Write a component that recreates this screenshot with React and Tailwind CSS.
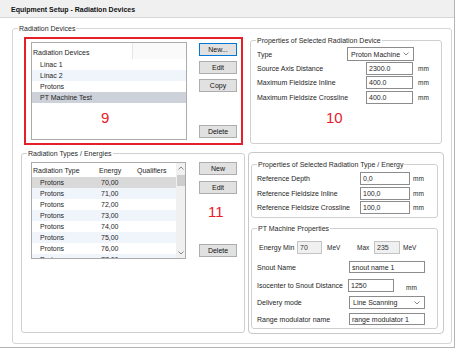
import React from "react";

function Group({ label, className = "", children }) {
  return (
    <div className={"border border-[#cfcfcf] rounded-[3px] " + className}>
      <div className="-mt-[5px] ml-[5px] px-[1px] w-fit h-[9px] bg-white leading-[9px] text-[#2a2a2a] whitespace-nowrap">
        {label}
      </div>
      {children}
    </div>
  );
}

function Btn({ children, className = "", primary = false }) {
  return (
    <div
      className={
        "h-[13px] w-[38px] flex items-center justify-center bg-[#e1e1e1] border text-[#111] " +
        (primary ? "border-[#0078d7] " : "border-[#adadad] ") +
        className
      }
    >
      {children}
    </div>
  );
}

function Input({ value, className = "", disabled = false }) {
  return (
    <div
      className={
        "border flex items-center pl-[2px] whitespace-nowrap " +
        (disabled ? "bg-[#f0f0f0] border-[#c4c4c4] text-[#333] " : "bg-white border-[#8c8c8c] ") +
        className
      }
    >
      {value}
    </div>
  );
}

function Chevron({ up = false }) {
  return (
    <svg width="6" height="4" viewBox="0 0 6 4">
      <path
        d={up ? "M0.5 3.5 L3 1 L5.5 3.5" : "M0.5 0.5 L3 3 L5.5 0.5"}
        fill="none"
        stroke="#7a7a7a"
        strokeWidth="0.9"
      />
    </svg>
  );
}

function Select({ value, className = "" }) {
  return (
    <div className={"border border-[#8c8c8c] bg-white flex items-center justify-between pl-[3px] pr-[4px] whitespace-nowrap " + className}>
      <span>{value}</span>
      <Chevron />
    </div>
  );
}

const devices = ["Linac 1", "Linac 2", "Protons", "PT Machine Test"];
const energies = ["70,00", "71,00", "72,00", "73,00", "74,00", "75,00", "76,00", "77,00"];

export default function App() {
  return (
    <div className="w-[460px] h-[352px] bg-white font-['Liberation_Sans',Arial,sans-serif] text-[7px] leading-[9px] text-[#1e1e1e]">
      <div className="w-[455px] h-[348px] border-r border-b border-[#b4b4b4] flex flex-col">
        {/* title bar */}
        <div className="h-[18px] shrink-0 bg-[#f0f0f0] border-b border-[#d8d8d8] pl-[11px] pt-[2px] flex items-center font-bold text-[#111]">
          Equipment Setup - Radiation Devices
        </div>

        <div className="pl-[12px] pt-[10px]">
          <Group label="Radiation Devices" className="w-[440px] h-[316px] border-[#d6d6d6]">
            {/* top row */}
            <div className="flex items-start">
              {/* red highlighted box */}
              <div className="ml-[11px] mt-[4px] w-[219px] h-[108px] border-2 border-[#e5202b] flex items-start">
                {/* list */}
                <div className="ml-[5px] mt-[3px] w-[156px] h-[98px] border border-[#ababab] bg-white flex flex-col overflow-hidden">
                  <div className="h-[16px] shrink-0 flex">
                    <div className="w-[101px] border-r border-[#e5e5e5] pl-[1px] pt-[3px] flex items-center">Radiation Devices</div>
                    <div className="flex-1 bg-[#fafafa]" />
                  </div>
                  {devices.map((d, i) => (
                    <div
                      key={d}
                      className={
                        "h-[11px] shrink-0 flex items-center pl-[8px] " +
                        (i === 3 ? "bg-[#cdd1d9]" : i % 2 === 1 ? "bg-[#f0f4fb]" : "bg-white")
                      }
                    >
                      {d}
                    </div>
                  ))}
                  <div className="mt-[7px] pl-[69px] text-[15px] leading-[15px] text-[#e5202b]">9</div>
                </div>
                {/* buttons */}
                <div className="ml-[12px] flex flex-col">
                  <Btn primary className="mt-[4px]">New...</Btn>
                  <Btn className="mt-[5px]">Edit</Btn>
                  <Btn className="mt-[5px]">Copy</Btn>
                  <Btn className="mt-[33px]">Delete</Btn>
                </div>
              </div>

              {/* properties of selected device */}
              <Group label="Properties of Selected Radiation Device" className="ml-[7px] mt-[7px] w-[192px] h-[104px] border-[#c8c8c8]">
                <div className="pl-[6px] flex flex-col">
                  <div className="mt-[2px] flex items-center">
                    <span className="w-[90px]">Type</span>
                    <Select value="Proton Machine" className="w-[67px] h-[14px]" />
                  </div>
                  <div className="mt-[1px] flex items-center">
                    <span className="w-[109px]">Source Axis Distance</span>
                    <Input value="2300.0" className="w-[47px] h-[13px]" />
                    <span className="ml-[5px] text-[6.5px]">mm</span>
                  </div>
                  <div className="mt-[1px] flex items-center">
                    <span className="w-[109px]">Maximum Fieldsize Inline</span>
                    <Input value="400.0" className="w-[47px] h-[13px]" />
                    <span className="ml-[5px] text-[6.5px]">mm</span>
                  </div>
                  <div className="mt-[2px] flex items-center">
                    <span className="w-[109px]">Maximum Fieldsize Crossline</span>
                    <Input value="400.0" className="w-[47px] h-[13px]" />
                    <span className="ml-[5px] text-[6.5px]">mm</span>
                  </div>
                  <div className="mt-[6px] pl-[69px] text-[15px] leading-[15px] text-[#e5202b]">10</div>
                </div>
              </Group>
            </div>

            {/* bottom row */}
            <div className="flex items-start">
              <Group label="Radiation Types / Energies" className="ml-[8px] mt-[8px] w-[224px] h-[180px] border-[#c8c8c8]">
                <div className="flex items-start">
                  {/* list with scrollbar */}
                  <div className="ml-[9px] mt-[4px] w-[155px] h-[97px] border border-[#ababab] bg-white flex overflow-hidden">
                    <div className="w-[144px] flex flex-col overflow-hidden">
                      <div className="h-[14px] shrink-0 flex items-center pt-[1px]">
                        <span className="w-[66px] pl-[1px]">Radiation Type</span>
                        <span className="w-[38px] pl-[1px]">Energy</span>
                        <span className="pl-[1px]">Qualifiers</span>
                      </div>
                      {energies.map((e, i) => (
                        <div
                          key={e}
                          className={
                            "h-[11px] shrink-0 flex items-center " +
                            (i === 0 ? "bg-[#d9d9d9]" : i % 2 === 1 ? "bg-[#f0f4fb]" : "bg-white")
                          }
                        >
                          <span className="w-[69px] pl-[8px]">Protons</span>
                          <span>{e}</span>
                        </div>
                      ))}
                    </div>
                    <div className="w-[9px] bg-[#f0f0f0] flex flex-col items-center">
                      <div className="h-[10px] flex items-center justify-center">
                        <Chevron up />
                      </div>
                      <div className="mt-[2px] w-[8px] h-[11px] bg-[#cdcdcd]" />
                      <div className="flex-1" />
                      <div className="h-[10px] flex items-center justify-center">
                        <Chevron />
                      </div>
                    </div>
                  </div>
                  {/* buttons */}
                  <div className="ml-[13px] flex flex-col">
                    <Btn className="mt-[4px]">New</Btn>
                    <Btn className="mt-[6px]">Edit</Btn>
                    <div className="mt-[10px] pl-[9px] text-[15px] leading-[15px] text-[#e5202b]">11</div>
                    <Btn className="mt-[25px]">Delete</Btn>
                  </div>
                </div>
              </Group>

              {/* right container */}
              <div className="ml-[3px] mt-[7px] w-[196px] h-[182px] border border-[#c8c8c8] rounded-[4px] bg-white flex flex-col">
                <Group label="Properties of Selected Radiation Type / Energy" className="ml-[2px] mt-[11px] w-[187px] h-[54px] border-[#c8c8c8]">
                  <div className="pl-[5px] flex flex-col">
                    <div className="mt-[3px] flex items-center">
                      <span className="w-[103px]">Reference Depth</span>
                      <Input value="0,0" className="w-[50px] h-[13px]" />
                      <span className="ml-[3px] text-[6.5px]">mm</span>
                    </div>
                    <div className="mt-[2px] flex items-center">
                      <span className="w-[103px]">Reference Fieldsize Inline</span>
                      <Input value="100,0" className="w-[50px] h-[13px]" />
                      <span className="ml-[3px] text-[6.5px]">mm</span>
                    </div>
                    <div className="mt-[1px] flex items-center">
                      <span className="w-[103px]">Reference Fieldsize Crossline</span>
                      <Input value="100,0" className="w-[50px] h-[13px]" />
                      <span className="ml-[3px] text-[6.5px]">mm</span>
                    </div>
                  </div>
                </Group>

                <Group label="PT Machine Properties" className="ml-[2px] mt-[10px] w-[187px] h-[101px] border-[#c8c8c8]">
                  <div className="pl-[5px] flex flex-col">
                    <div className="mt-[8px] pl-[2px] flex items-center">
                      <span className="w-[38px]">Energy Min</span>
                      <Input value="70" disabled className="w-[25px] h-[13px]" />
                      <span className="ml-[5px] w-[30px] text-[6.5px]">MeV</span>
                      <span className="w-[17px] text-[6.5px]">Max</span>
                      <Input value="235" disabled className="w-[26px] h-[13px]" />
                      <span className="ml-[3px] text-[6.5px]">MeV</span>
                    </div>
                    <div className="mt-[7px] flex items-center">
                      <span className="w-[92px]">Snout Name</span>
                      <Input value="snout name 1" className="w-[76px] h-[12px]" />
                    </div>
                    <div className="mt-[5px] flex items-center">
                      <span className="w-[91px]">Isocenter to Snout Distance</span>
                      <Input value="1250" className="w-[46px] h-[13px]" />
                      <span className="ml-[12px] pt-[5px] text-[6.5px]">mm</span>
                    </div>
                    <div className="mt-[4px] flex items-center">
                      <span className="w-[92px]">Delivery mode</span>
                      <Select value="Line Scanning" className="w-[76px] h-[13px]" />
                    </div>
                    <div className="mt-[4px] flex items-center">
                      <span className="w-[92px]">Range modulator name</span>
                      <Input value="range modulator 1" className="w-[76px] h-[12px]" />
                    </div>
                  </div>
                </Group>
              </div>
            </div>
          </Group>
        </div>
      </div>
    </div>
  );
}
